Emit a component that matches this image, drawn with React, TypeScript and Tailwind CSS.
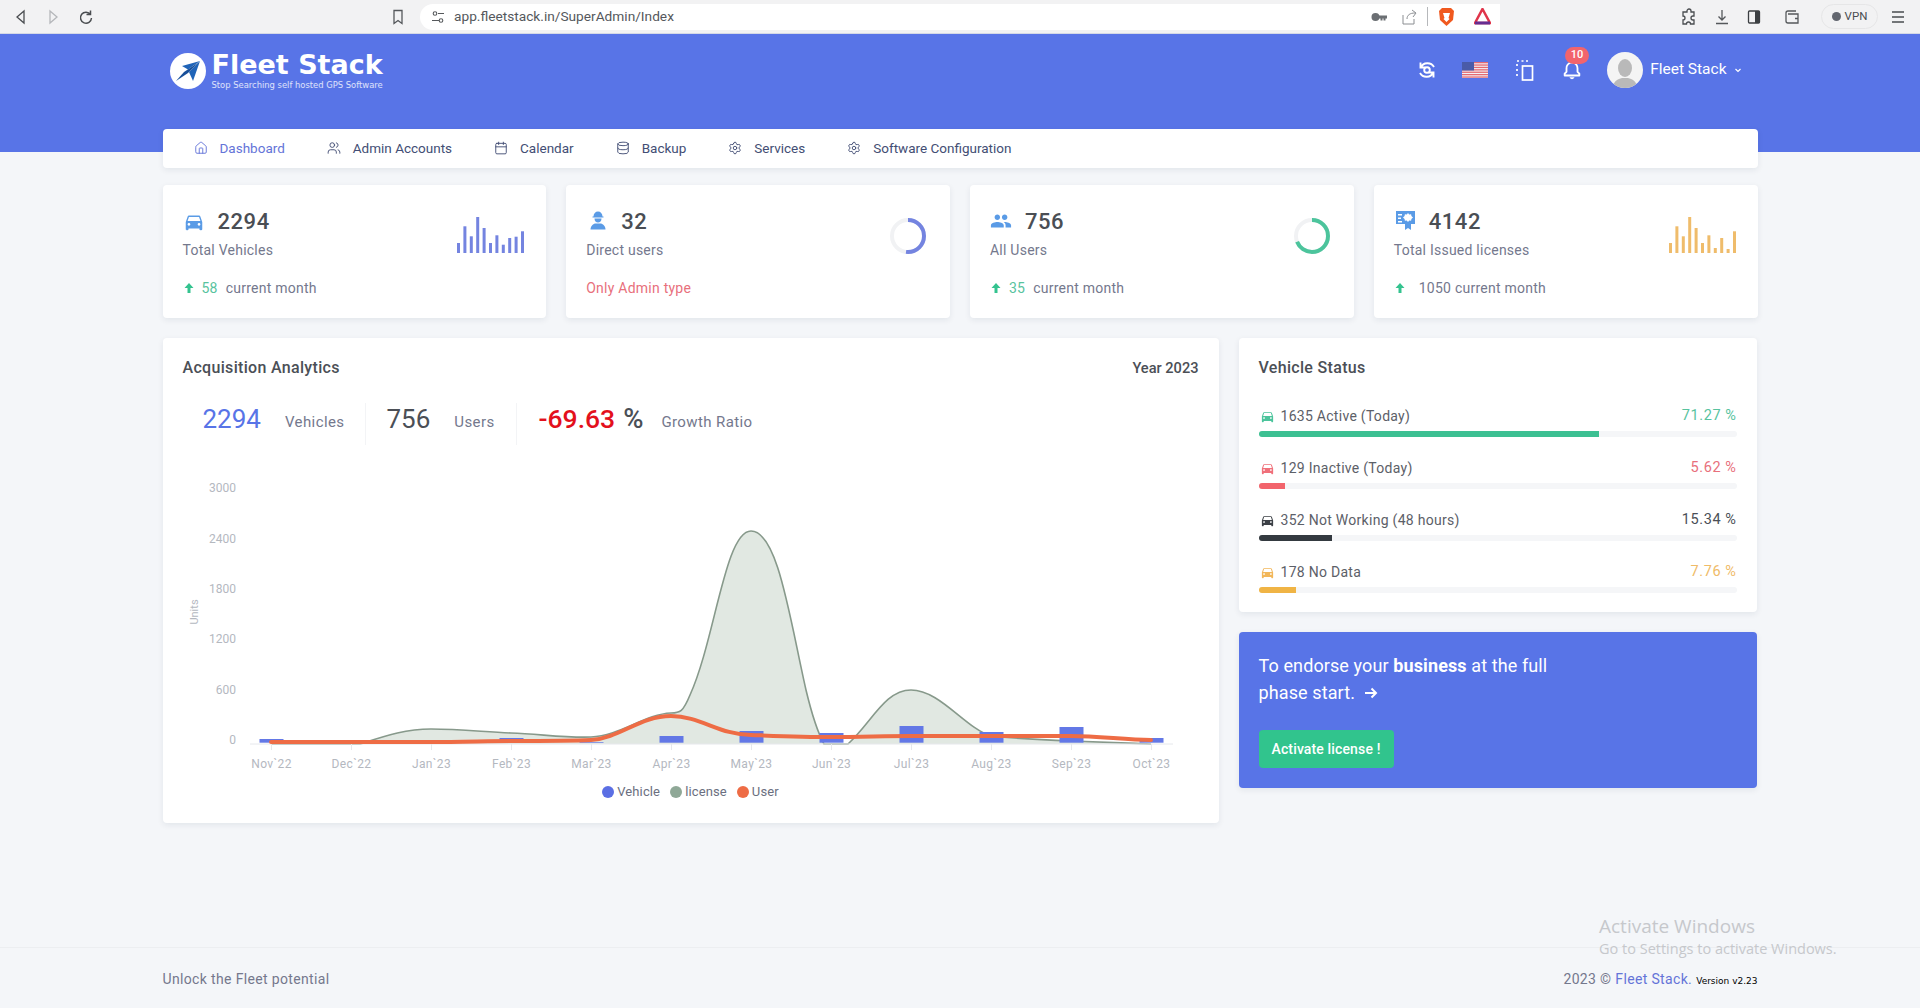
import { Calendar, Database, House, Settings, Users } from 'lucide-react';
import { BiBell } from 'react-icons/bi';
import { MdDirectionsCar, MdPeople } from 'react-icons/md';

const navItems = [
  { label: 'Dashboard', Icon: House, active: true, gap: 'ml-0' },
  { label: 'Admin Accounts', Icon: Users, active: false, gap: 'ml-[42px]' },
  { label: 'Calendar', Icon: Calendar, active: false, gap: 'ml-[42px]' },
  { label: 'Backup', Icon: Database, active: false, gap: 'ml-[42px]' },
  { label: 'Services', Icon: Settings, active: false, gap: 'ml-[42px]' },
  { label: 'Software Configuration', Icon: Settings, active: false, gap: 'ml-[42px]' }
];

const statusRows = [
  { label: '1635 Active (Today)', pct: '71.27 %', width: 71.27, text: 'text-[#58c39e]', bar: 'bg-[#3cc092]', icon: 'text-[#4cc49c]' },
  { label: '129 Inactive (Today)', pct: '5.62 %', width: 5.62, text: 'text-[#e8707c]', bar: 'bg-[#f2646c]', icon: 'text-[#f0707a]' },
  { label: '352 Not Working (48 hours)', pct: '15.34 %', width: 15.34, text: 'text-[#4b4f56]', bar: 'bg-[#343a40]', icon: 'text-[#3c4046]' },
  { label: '178 No Data', pct: '7.76 %', width: 7.76, text: 'text-[#efbb68]', bar: 'bg-[#f0b445]', icon: 'text-[#f2b75a]' }
];

const months = ['Nov`22', 'Dec`22', 'Jan`23', 'Feb`23', 'Mar`23', 'Apr`23', 'May`23', 'Jun`23', 'Jul`23', 'Aug`23', 'Sep`23', 'Oct`23'];
const barTops = [739, 740, 743, 738, 742, 736, 731, 733, 726, 732, 727, 738];
const yLabels = [
  { v: '3000', y: 488 },
  { v: '2400', y: 539 },
  { v: '1800', y: 589 },
  { v: '1200', y: 639 },
  { v: '600', y: 690 },
  { v: '0', y: 740 }
];

const licensePath =
  'M271 744 L360 744 C385 736 405 729 431 729 C460 729 485 732 511 733 C540 734 565 738 591 737 C620 736 645 714 671 713 C680 713 683 712 690 695 C715 640 725 531 751 531 C778 531 790 620 806 690 C812 715 818 733 824 744 L848 744 C872 722 885 690 911 690 C940 690 965 728 991 736 C1020 739 1045 740 1071 741 C1100 742 1125 743 1151 744';
const userPath =
  'M271 742 C300 742 400 742 431 742 C460 742 490 741 511 741 C540 741 570 741 591 740 C620 738 640 716 671 716 C700 716 720 735 751 735 C780 736 805 737 831 737 C860 737 885 736 911 736 L1071 736 C1100 736 1125 740 1151 740';

const Spark = ({ tops, color }: { tops: number[]; color: string }) => (
  <svg width="67" height="36" viewBox="0 0 67 36" className="mt-[9px]">
    {tops.map((t, i) => (
      <rect key={i} x={i * 6.4} y={t} width="3" height={36 - t} fill={color} />
    ))}
  </svg>
);

const Donut = ({ dash, color }: { dash: number; color: string }) => (
  <svg width="40" height="40" viewBox="0 0 40 40" className="mt-[6px] -rotate-90">
    <circle cx="20" cy="20" r="16" fill="none" stroke="#f1f2f4" strokeWidth="4" />
    <circle cx="20" cy="20" r="16" fill="none" stroke={color} strokeWidth="4" strokeDasharray={`${dash} 101`} />
  </svg>
);

const WorkerIcon = () => (
  <svg width="16" height="19" viewBox="0 0 16 19" fill="#5a9be6" className="mb-[3px] ml-[2px]">
    <path d="M3.500 5.500C3.500 2.500 5.500 .5 8 .5s4.500 2 4.500 5h1v1h-11v-1z" />
    <path d="M4.500 7.500h7c0 2.500-1.500 4-3.500 4s-3.500-1.500-3.500-4z" />
    <path d="M.5 18.500c0-3.500 2.500-5.500 4.500-6h6c2 .5 4.500 2.500 4.500 6z" />
  </svg>
);

const LicenseIcon = () => (
  <svg width="19" height="19" viewBox="0 0 19 19" fill="#5a9be6" className="mb-[3px]">
    <path
      fillRule="evenodd"
      d="M0 0h19v13h-4v6l-3-2-3 2v-6H0z M2 3v1.500h4V3z M2 6.500V8h3V6.500z M2 10v1.500h4V10z M12 2l1.200 1.500 1.900-.3.300 1.900L17 6.500l-1.600 1.400-.3 1.900-1.900-.3L12 11l-1.200-1.500-1.900.3-.3-1.900L7 6.500l1.600-1.400.3-1.900 1.900.3z"
    />
  </svg>
);

const StatCard = ({ icon, value, label, chart, footer }: { icon: React.ReactNode; value: string; label: string; chart: React.ReactNode; footer: React.ReactNode }) => (
  <div className="h-[133px] rounded bg-white pl-5 pr-[22px] pt-[23px] tracking-[0.015em] shadow-[0_2px_6px_rgba(18,38,63,0.08)]">
    <div className="flex items-start justify-between">
      <div>
        <div className="flex h-[27px] items-center">
          <div className="w-[35px] pl-[2px]">{icon}</div>
          <span className="text-[22px] font-medium leading-[29px] tracking-[0.025em] text-[#4a4e54]">{value}</span>
        </div>
        <div className="mt-[6px] h-[18px] text-[14px] leading-[18px] text-[#74788d]">{label}</div>
      </div>
      {chart}
    </div>
    <div className="mt-[20px] flex h-[18px] items-center text-[14px] text-[#74788d]">{footer}</div>
  </div>
);

const Up = () => (
  <svg width="12" height="12" viewBox="0 0 12 12" fill="#34c38f">
    <path d="M6 1l4.500 5H7.500v5h-3V6H1.500z" />
  </svg>
);

const AddressIcons = () => (
  <div className="ml-auto flex items-center pr-[9px]">
    <svg width="16" height="10" viewBox="0 0 16 10" fill="#6b6f73">
      <circle cx="4.500" cy="5" r="4" />
      <path d="M8 3.500h8v3h-1.500v2h-2v-2h-1v2H9.500v-2H8z" />
    </svg>
    <svg width="18" height="18" viewBox="0 0 18 18" fill="none" stroke="#8b8e92" strokeWidth="1" className="ml-[13px]">
      <path d="M3 7v9h11v-5M7 11c0-4 3-6 8-6M12 2l4 3-3 4" />
    </svg>
    <div className="ml-[9px] h-[19px] w-px bg-[#b6b8bb]" />
    <svg width="15" height="18" viewBox="0 0 15 18" className="ml-[11px]">
      <path d="M3 0h9l3 3-1 9-6.500 6L1 12 0 3z" fill="#f0591f" />
      <path d="M4 5h7l-1.500 5 1 1-3 3-3-3 1-1z" fill="#fff" />
    </svg>
    <svg width="17" height="17" viewBox="0 0 17 17" className="ml-[20px]">
      <path d="M8.500 1L16 15H1z" fill="none" stroke="#e0344a" strokeWidth="2.500" />
      <path d="M1 15h15" stroke="#662d91" strokeWidth="3" />
    </svg>
  </div>
);

const BrowserBar = () => (
  <div className="flex h-[34px] items-center border-b border-[#d5d9e6] bg-[#f2f2f3] pl-3">
    <svg width="18" height="18" viewBox="0 0 18 18" fill="none" stroke="#4a4d50" strokeWidth="1.300">
      <path d="M12 3L5 9l7 6z" />
    </svg>
    <svg width="18" height="18" viewBox="0 0 18 18" fill="none" stroke="#b5b7ba" strokeWidth="1.300" className="ml-[14px]">
      <path d="M6 3l7 6-7 6z" />
    </svg>
    <svg width="18" height="18" viewBox="0 0 18 18" fill="none" stroke="#4a4d50" strokeWidth="1.500" className="ml-[15px]">
      <path d="M13.500 6.500A5.500 5.500 0 1 0 14.500 10M13.500 2.500v4h-4" />
    </svg>
    <svg width="18" height="18" viewBox="0 0 18 18" fill="none" stroke="#55585b" strokeWidth="1.300" className="ml-[294px]">
      <path d="M5 2.500h8v13l-4-3-4 3z" />
    </svg>
    <div className="ml-[13px] flex h-[26px] w-[1080px] items-center rounded-l-[13px] bg-white pl-[10px]">
      <svg width="16" height="16" viewBox="0 0 16 16" fill="none" stroke="#55585b" strokeWidth="1.100">
        <circle cx="5" cy="4.500" r="1.800" />
        <circle cx="11" cy="11.500" r="1.800" />
        <path d="M8 4.500h6M2 11.500h7" />
      </svg>
      <span className="ml-2 text-[13.700px] text-[#55585c]">app.fleetstack.in/SuperAdmin/Index</span>
      <AddressIcons />
    </div>
    <svg width="18" height="18" viewBox="0 0 18 18" fill="none" stroke="#4a4d50" strokeWidth="1.300" className="ml-[180px]">
      <path d="M7 3a2 2 0 0 1 4 0v1h3v4h-1a2 2 0 0 0 0 4h1v4h-3.500a2 2 0 0 0-4 0H3v-4a2 2 0 0 0 0-4V4h4z" />
    </svg>
    <svg width="18" height="18" viewBox="0 0 18 18" fill="none" stroke="#55585b" strokeWidth="1.300" className="ml-[15px]">
      <path d="M9 2v10M5.500 8.500L9 12l3.500-3.500M3 15.500h12" />
    </svg>
    <svg width="18" height="18" viewBox="0 0 18 18" className="ml-[14px]">
      <rect x="3.500" y="3" width="11" height="12" rx="1" fill="none" stroke="#3c3f42" strokeWidth="1.300" />
      <rect x="10" y="3" width="4.500" height="12" fill="#3c3f42" />
    </svg>
    <svg width="18" height="18" viewBox="0 0 18 18" fill="none" stroke="#55585b" strokeWidth="1.300" className="ml-5">
      <path d="M13 3H5a2 2 0 0 0-2 2v8a2 2 0 0 0 2 2h10V6H5M12 10.500h3" />
    </svg>
    <div className="ml-5 flex h-[25px] w-[57px] items-center justify-center gap-1 rounded-full border border-[#e6e6e7] text-[11.500px] text-[#4a4d50]">
      <span className="h-[9px] w-[9px] rounded-full bg-[#62666f]" />
      VPN
    </div>
    <svg width="18" height="18" viewBox="0 0 18 18" stroke="#4a4d50" strokeWidth="1.300" className="ml-[11px]">
      <path d="M3 4h12M3 9h12M3 14h12" />
    </svg>
  </div>
);

const Flag = () => (
  <svg width="26" height="16" viewBox="0 0 26 16">
    <rect width="26" height="16" fill="#f3f3f6" />
    {[0, 2.4, 4.800, 7.200, 9.600, 12, 14.400].map((y) => (
      <rect key={y} y={y} width="26" height="1.300" fill="#e46a72" />
    ))}
    <rect width="12" height="8.500" fill="#4a5ba8" />
  </svg>
);

const Logo = () => (
  <div className="flex items-start">
    <svg width="36" height="36" viewBox="0 0 36 36" className="mt-[19px]">
      <circle cx="18" cy="18" r="18" fill="#fff" />
      <path d="M30 8L12 13l6 3.500z" fill="#1f64b8" />
      <path d="M30 8L23 28l-4-9z" fill="#1f64b8" />
      <path d="M29 9L18 20 6 28l8-9z" fill="#174f99" />
    </svg>
    <div className="ml-[6px] w-[175px] text-white [font-family:'DejaVu_Sans',sans-serif]">
      <div className="mt-[15px] text-[27px] font-bold leading-[32px] whitespace-nowrap">Fleet Stack</div>
      <div className="-mt-px text-[8.400px] leading-[10px] whitespace-nowrap text-white/80">Stop Searching self hosted GPS Software</div>
    </div>
  </div>
);

const TopHeader = () => (
  <header className="h-[118px] bg-[#5874e7]">
    <div className="mx-auto flex w-[1595px] items-start justify-between">
      <div className="pl-[7px]">
        <Logo />
      </div>
      <div className="flex items-center pt-[18px] pr-[15px] text-white">
        <svg width="22" height="22" viewBox="0 0 22 22" fill="none" stroke="#fff" strokeWidth="1.900">
          <circle cx="11" cy="11" r="2.800" />
          <path d="M4.500 3.500v5h5M4.700 8.500A7.500 7.500 0 0 1 18 8" />
          <path d="M17.500 18.500v-5h-5M17.300 13.500A7.500 7.500 0 0 1 4 14" />
        </svg>
        <div className="ml-[24px]">
          <Flag />
        </div>
        <svg width="22" height="22" viewBox="0 0 22 22" fill="none" stroke="#fff" strokeWidth="1.700" className="ml-[26px]">
          <rect x="8.500" y="7" width="10" height="14" />
          <path d="M3 2h2M7.500 2h2M12 2h2M3 5v2M3 10v2M3 15v2" />
        </svg>
        <div className="relative ml-[25px]">
          <BiBell size={22} />
          <span className="absolute -top-[12px] left-[4px] flex h-[17px] w-[24px] items-center justify-center rounded-full bg-[#f2646c] text-[11px] font-medium">10</span>
        </div>
        <div className="ml-[24px] flex h-9 w-9 items-end justify-center overflow-hidden rounded-full bg-[#f4f4f4]">
          <svg width="24" height="30" viewBox="0 0 24 30" fill="#b9b9b9">
            <ellipse cx="12" cy="10" rx="7" ry="9" />
            <path d="M0 30c0-7 5-9 9-10h6c4 1 9 3 9 10z" />
          </svg>
        </div>
        <span className="ml-[7px] -mt-px text-[15.500px]">Fleet Stack</span>
        <svg width="10" height="10" viewBox="0 0 10 10" fill="none" stroke="#fff" strokeWidth="1.200" className="ml-[6px] -mt-px">
          <path d="M2.500 4L5 6.500 7.500 4" />
        </svg>
      </div>
    </div>
  </header>
);

const AnalyticsChart = () => (
  <svg width="1056" height="337" viewBox="163 445 1056 337" className="block">
    <path d={`${licensePath} Z`} fill="#e1e8e2" />
    <path d={licensePath} fill="none" stroke="#87998b" strokeWidth="1.600" />
    <path d="M250 744H1173" stroke="#e6e8ec" strokeWidth="1" />
    {months.map((m, i) => (
      <g key={m}>
        <path d={`M${271.5 + i * 80} 744v6`} stroke="#e6e8ec" />
        {barTops[i] < 743 && <rect x={259.5 + i * 80} y={barTops[i]} width="24" height={742.7 - barTops[i]} fill="#6378e6" />}
        <text x={271.5 + i * 80} y="768" textAnchor="middle" className="fill-[#b4b8bf] text-[12px] tracking-[0.03em]">
          {m}
        </text>
      </g>
    ))}
    <path d={userPath} fill="none" stroke="#ee6c45" strokeWidth="4" strokeLinecap="round" />
    {yLabels.map((l) => (
      <text key={l.v} x="236" y={l.y + 4} textAnchor="end" className="fill-[#b4b8bf] text-[12px]">
        {l.v}
      </text>
    ))}
    <text x="198" y="612" textAnchor="middle" transform="rotate(-90 198 612)" className="fill-[#b4b8bf] text-[11px]">
      Units
    </text>
  </svg>
);

const App = () => {
  return (
    <div className="relative flex min-h-[1008px] flex-col overflow-hidden bg-[#f4f6f9] text-[#4b4f56] [font-family:Roboto,sans-serif]">
      <BrowserBar />
      <TopHeader />

      <main className="mx-auto -mt-[23px] w-[1595px]">
        <nav className="flex h-[39px] items-center rounded bg-white pb-px pl-[31px] text-[13.500px] text-[#434e74] shadow-[0_2px_6px_rgba(18,38,63,0.08)]">
          {navItems.map(({ label, Icon, active, gap }) => (
            <a key={label} href="#" className={`flex items-center gap-[12px] ${gap} ${active ? 'text-[#6474d8]' : ''}`}>
              <Icon size={14} strokeWidth={1.6} />
              {label}
            </a>
          ))}
        </nav>

        <div className="mt-[17px] grid grid-cols-4 gap-5">
          <StatCard
            icon={<MdDirectionsCar size={22} className="-ml-[2px] text-[#5a9be6]" />}
            value="2294"
            label="Total Vehicles"
            chart={<Spark tops={[26, 9.3, 19.3, 0, 11, 26, 18.3, 27.7, 21, 19.7, 14.3]} color="#7484e0" />}
            footer={
              <>
                <Up />
                <span className="ml-[7px] text-[#58c39e]">58</span>
                <span className="ml-2">current month</span>
              </>
            }
          />
          <StatCard
            icon={<WorkerIcon />}
            value="32"
            label="Direct users"
            chart={
              <div className="pt-[2px]">
                <Donut dash={52} color="#7484e0" />
              </div>
            }
            footer={<span className="text-[#e8707c]">Only Admin type</span>}
          />
          <StatCard
            icon={<MdPeople size={22} className="-ml-[2px] -mt-[2px] text-[#5a9be6]" />}
            value="756"
            label="All Users"
            chart={
              <div className="pt-[2px]">
                <Donut dash={69} color="#4cc49c" />
              </div>
            }
            footer={
              <>
                <Up />
                <span className="ml-[7px] text-[#58c39e]">35</span>
                <span className="ml-2">current month</span>
              </>
            }
          />
          <StatCard
            icon={<LicenseIcon />}
            value="4142"
            label="Total Issued licenses"
            chart={<Spark tops={[26, 9.3, 19.3, 0, 11, 26, 18.3, 31, 21, 32, 14.3]} color="#efbc6b" />}
            footer={
              <>
                <Up />
                <span className="ml-[13px]">1050 current month</span>
              </>
            }
          />
        </div>

        <div className="mt-5 grid grid-cols-[1056px_518px] items-start gap-5">
          <section className="rounded bg-white pt-5 pb-[21px] shadow-[0_2px_6px_rgba(18,38,63,0.08)]">
            <div className="flex h-5 items-center justify-between px-5">
              <h2 className="text-[16px] font-medium tracking-[0.02em] text-[#4b4f56]">Acquisition Analytics</h2>
              <span className="pt-[2px] text-[14.600px] font-medium">Year 2023</span>
            </div>
            <div className="mt-[25px] flex h-[42px] items-start pl-5 tracking-[0.025em]">
              <div className="flex h-full w-[183px] items-baseline border-r border-[#f3f4f6] pl-5">
                <span className="text-[26px] leading-[32px] tracking-normal text-[#5874e7]">2294</span>
                <span className="ml-[24px] -translate-y-px text-[15px] text-[#74788d]">Vehicles</span>
              </div>
              <div className="flex h-full w-[151px] items-baseline border-r border-[#f3f4f6] pl-[21px]">
                <span className="text-[26px] leading-[32px] tracking-normal">756</span>
                <span className="ml-[24px] -translate-y-px text-[15px] text-[#74788d]">Users</span>
              </div>
              <div className="flex h-full items-baseline pl-[22px]">
                <span className="text-[26.500px] font-medium leading-[32px] tracking-normal text-[#e3101c]">-69.63</span>
                <span className="ml-[8px] text-[27.500px] font-medium leading-[32px] tracking-normal">%</span>
                <span className="ml-[18px] -translate-y-px text-[15px] text-[#74788d]">Growth Ratio</span>
              </div>
            </div>
            <AnalyticsChart />
            <div className="flex h-5 items-center justify-center text-[13px] tracking-[0.01em] text-[#6b6f80]">
              <span className="h-3 w-3 rounded-full bg-[#5b6fe4]" />
              <span className="ml-[3px]">Vehicle</span>
              <span className="ml-[10px] h-3 w-3 rounded-full bg-[#8fa897]" />
              <span className="ml-[3px]">license</span>
              <span className="ml-[10px] h-3 w-3 rounded-full bg-[#ee6c45]" />
              <span className="ml-[3px]">User</span>
            </div>
          </section>

          <div className="flex flex-col gap-5">
            <section className="rounded bg-white px-5 pt-5 pb-[19px] shadow-[0_2px_6px_rgba(18,38,63,0.08)]">
              <h2 className="h-5 text-[16px] font-medium leading-5 tracking-[0.02em] text-[#4b4f56]">Vehicle Status</h2>
              <div className="mt-7 flex flex-col gap-[21px]">
                {statusRows.map((r) => (
                  <div key={r.label}>
                    <div className="flex h-5 items-center justify-between text-[14px] tracking-[0.02em]">
                      <div className="flex items-center text-[#5c6068]">
                        <MdDirectionsCar size={15} className={`ml-[1px] ${r.icon}`} />
                        <span className="ml-[6px]">{r.label}</span>
                      </div>
                      <span className={`text-[14.500px] tracking-[0.04em] ${r.text}`}>{r.pct}</span>
                    </div>
                    <div className="mt-[5px] h-[6px] overflow-hidden rounded-full bg-[#f5f6f8]">
                      <div className={`h-full ${r.bar}`} style={{ width: `${r.width}%` }} />
                    </div>
                  </div>
                ))}
              </div>
            </section>

            <section className="rounded bg-[#5874e7] p-5 text-white shadow-[0_2px_6px_rgba(18,38,63,0.08)]">
              <div className="text-[18px] leading-[27px] tracking-[0.006em]">
                <p>
                  To endorse your <b className="font-bold">business</b> at the full
                </p>
                <p className="flex items-center">
                  phase start.
                  <svg width="14" height="14" viewBox="0 0 14 14" fill="none" stroke="#fff" strokeWidth="2" className="ml-[9px]">
                    <path d="M1 7h11M7.500 2.500L12 7l-4.500 4.500" />
                  </svg>
                </p>
              </div>
              <button className="mt-6 flex h-[38px] w-[135px] items-center justify-center rounded bg-[#31c48d] text-[14px] font-medium tracking-[0.01em]">Activate license !</button>
            </section>
          </div>
        </div>
      </main>

      <footer className="mt-auto h-[61px] border-t border-[#eceef1]">
        <div className="mx-auto flex h-full w-[1595px] items-center justify-between pt-[2px] text-[14px] tracking-[0.025em] text-[#74788d]">
          <span>Unlock the Fleet potential</span>
          <span className="flex items-baseline whitespace-nowrap">
            2023 ©&nbsp;<span className="text-[#6474d8]">Fleet Stack.</span>
            <span className="ml-1 text-[9px] font-medium tracking-normal text-black [font-family:'DejaVu_Sans',sans-serif]">Version v2.23</span>
          </span>
        </div>
      </footer>

      <div className="absolute left-[1599px] top-[914px] text-[#c6c8cc] [font-family:'Open_Sans',sans-serif]">
        <div className="text-[19px] leading-[24px]">Activate Windows</div>
        <div className="text-[14.500px] leading-[21px]">Go to Settings to activate Windows.</div>
      </div>
    </div>
  );
};

export default App;
